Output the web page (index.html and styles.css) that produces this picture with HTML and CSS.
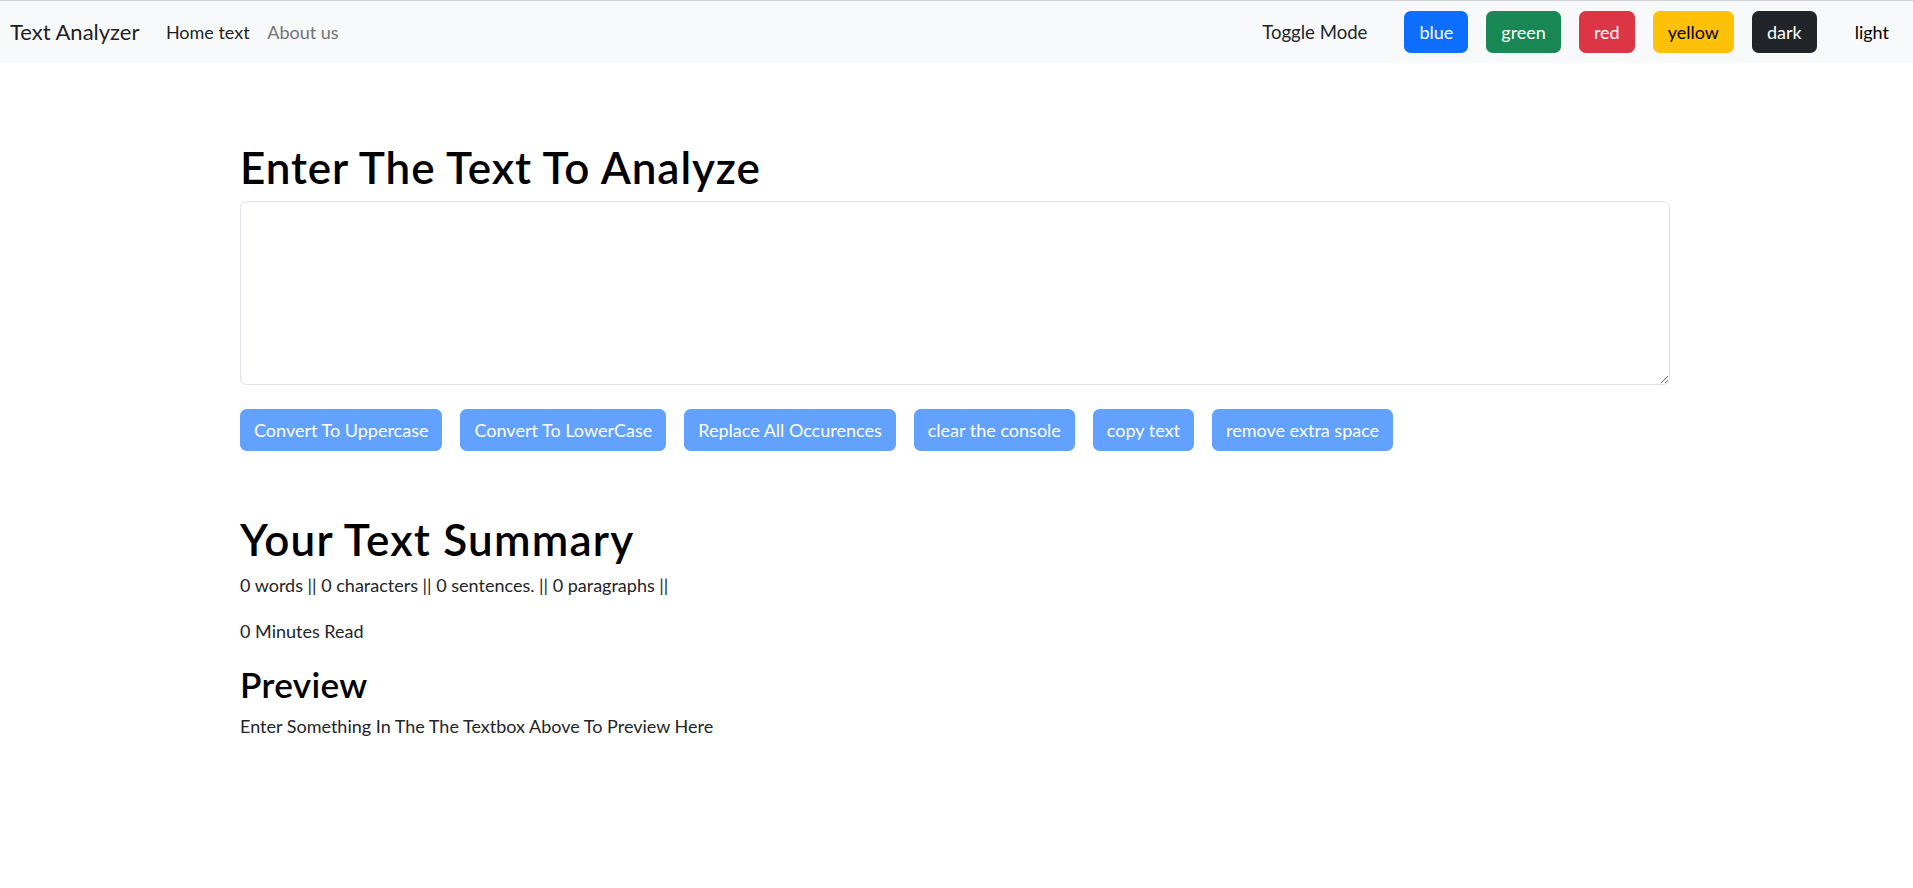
FILE: index.html
```html
<!DOCTYPE html>
<html lang="en">
<head>
<meta charset="utf-8">
<title>Text Analyzer</title>
<link rel="stylesheet" href="styles.css">
</head>
<body>
<nav class="navbar">
  <div class="nav-left">
    <a class="brand" href="#">Text Analyzer</a>
    <a class="nav-link active" href="#">Home text</a>
    <a class="nav-link" href="#">About us</a>
  </div>
  <div class="nav-right">
    <span class="toggle-label">Toggle Mode</span>
    <button class="btn btn-blue">blue</button>
    <button class="btn btn-green">green</button>
    <button class="btn btn-red">red</button>
    <button class="btn btn-yellow">yellow</button>
    <button class="btn btn-dark">dark</button>
    <button class="btn btn-light">light</button>
  </div>
</nav>
<main class="container">
  <h1 class="title">Enter The Text To Analyze</h1>
  <textarea class="textbox"></textarea>
  <div class="actions">
    <button class="action">Convert To Uppercase</button>
    <button class="action">Convert To LowerCase</button>
    <button class="action">Replace All Occurences</button>
    <button class="action">clear the console</button>
    <button class="action">copy text</button>
    <button class="action">remove extra space</button>
  </div>
  <h1 class="title summary-title">Your Text Summary</h1>
  <p class="stat">0 words || 0 characters || 0 sentences. || 0 paragraphs ||</p>
  <p class="stat">0 Minutes Read</p>
  <h2 class="sub">Preview</h2>
  <p class="preview">Enter Something In The The Textbox Above To Preview Here</p>
</main>
</body>
</html>
```
FILE: styles.css
```css
* { box-sizing: border-box; }
body {
  margin: 0;
  font-family: Lato, "Open Sans", sans-serif;
  font-size: 18px;
  line-height: 26.4px;
  color: #212529;
  background: #fff;
}
.navbar {
  height: 63px;
  border-top: 1px solid #d3d3d3;
  background: #f8f9fa;
  display: flex;
  align-items: center;
  padding: 0 9px 0 10px;
}
.nav-left { display: flex; align-items: center; }
.brand {
  font-size: 22px;
  color: rgba(0,0,0,.9);
  text-decoration: none;
  margin-right: 17.6px;
}
.nav-link {
  padding: 0 8.8px;
  color: #737474;
  text-decoration: none;
}
.nav-link.active { color: rgba(0,0,0,.9); }
.nav-right { margin-left: auto; display: flex; align-items: center; gap: 18px; }
.toggle-label { margin-right: 19px; font-size: 18.6px; }
.btn {
  height: 42px;
  padding: 0 14px;
  border: 1px solid transparent;
  border-radius: 6.6px;
  font-family: inherit;
  font-size: 18px;
  color: #fff;
}
.btn-blue { background: #0d6efd; }
.btn-green { background: #198754; }
.btn-red { background: #dc3545; }
.btn-yellow { background: #ffc107; color: #000; }
.btn-dark { background: #212529; }
.btn-light { background: #f8f9fa; color: #000; margin-left: 5px; }
.container {
  width: 1430px;
  margin-left: 240px;
  padding-top: 78px;
}
.title {
  font-size: 44px;
  font-weight: 600;
  line-height: 1.2;
  letter-spacing: 0.9px;
  color: #000;
  margin: 0 0 7px;
}
.textbox {
  display: block;
  width: 100%;
  height: 184px;
  margin: 0;
  border: 1px solid #dee2e6;
  border-radius: 6.6px;
  background: #fff;
}
.actions {
  display: flex;
  gap: 18px;
  margin-top: 24px;
}
.action {
  height: 42px;
  padding: 0 14px;
  border: none;
  border-radius: 6.6px;
  background: #62a1fe;
  color: #fff;
  font-family: inherit;
  font-size: 18px;
}
.summary-title { margin: 62.6px 0 6px; letter-spacing: 1.2px; }
.stat { margin: 0 0 19px; }
.sub {
  font-size: 35.2px;
  font-weight: 600;
  line-height: 1.2;
  letter-spacing: 0.3px;
  color: #000;
  margin: 2px 0 7.5px;
}
.preview { margin: 0; }
```
